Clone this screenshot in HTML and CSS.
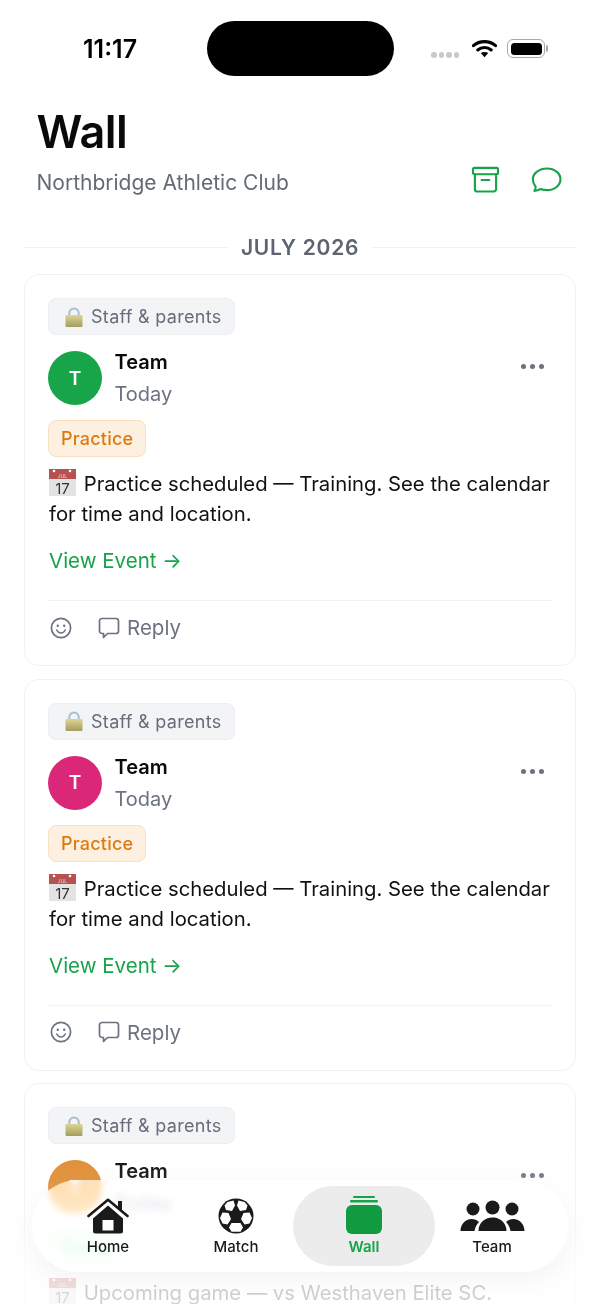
FILE: index.html
```html
<!DOCTYPE html>
<html lang="en">
<head>
    <meta charset="UTF-8">
    <meta name="viewport" content="width=device-width, initial-scale=1.0">
    <title>Wall</title>
    <link rel="stylesheet" href="styles.css">
</head>
<body>
    <svg class="icon-defs" width="0" height="0">
        <defs>
            <linearGradient id="lockBody" x1="0" y1="0" x2="0" y2="1">
                <stop offset="0" stop-color="#dcd596"/>
                <stop offset="1" stop-color="#a59c5c"/>
            </linearGradient>
            <symbol id="lock" viewBox="0 0 18 20">
                <path d="M4.300 9V6.200a4.700 4.700 0 0 1 9.400 0V9" fill="none" stroke="#a9bdd2" stroke-width="2"/>
                <rect x="0.500" y="8" width="17" height="12" rx="1.200" fill="url(#lockBody)"/>
            </symbol>
            <symbol id="calendar" viewBox="0 0 27 27">
                <rect x="0" y="0" width="27" height="27" fill="#e3e3e3"/>
                <rect x="0" y="0" width="27" height="10" fill="#b5524f"/>
                <circle cx="5" cy="2" r="1.300" fill="#fff"/>
                <circle cx="21" cy="2" r="1.300" fill="#fff"/>
                <text x="13.500" y="8.500" text-anchor="middle" class="cal-month">JUL</text>
                <text x="13.500" y="24.500" text-anchor="middle" class="cal-day">17</text>
            </symbol>
            <symbol id="smile" viewBox="0 0 22 22">
                <circle cx="11" cy="11" r="9.600" fill="none" stroke="currentColor" stroke-width="1.700"/>
                <circle cx="7.800" cy="8.800" r="1.200" fill="currentColor"/>
                <circle cx="14.200" cy="8.800" r="1.200" fill="currentColor"/>
                <path d="M6.800 13c1 2 2.500 3 4.200 3s3.200-1 4.200-3" fill="none" stroke="currentColor" stroke-width="1.600" stroke-linecap="round"/>
            </symbol>
            <symbol id="reply" viewBox="0 0 22 22">
                <path d="M4 1.500h14A2.500 2.500 0 0 1 20.500 4v10a2.500 2.500 0 0 1-2.500 2.500H9.500L5.500 20.500v-4H4A2.500 2.500 0 0 1 1.500 14V4A2.500 2.500 0 0 1 4 1.500z" fill="none" stroke="currentColor" stroke-width="1.700" stroke-linejoin="round"/>
            </symbol>
        </defs>
    </svg>

    <div class="screen">
        <div class="status-bar">
            <span class="status-time">11:17</span>
            <div class="island"></div>
            <div class="status-icons">
                <div class="signal"><i></i><i></i><i></i><i></i></div>
                <svg class="wifi" width="25" height="19" viewBox="0 0 26 19">
                    <path d="M1.500 6.500C7.800 1 18.200 1 24.500 6.500" fill="none" stroke="#000" stroke-width="3.200" stroke-linecap="round"/>
                    <path d="M6 11c4-3.300 10-3.300 14 0" fill="none" stroke="#000" stroke-width="3.200" stroke-linecap="round"/>
                    <path d="M13 18.500l-3.900-4.200c2.200-1.700 5.600-1.700 7.800 0z" fill="#000"/>
                </svg>
                <div class="battery"><div class="battery-fill"></div></div>
                <div class="battery-cap"></div>
            </div>
        </div>

        <header class="page-header">
            <div>
                <h1>Wall</h1>
                <p class="club">Northbridge Athletic Club</p>
            </div>
            <div class="header-actions">
                <svg width="29" height="27" viewBox="0 0 30 28" fill="none" stroke="#16a34a" stroke-width="2.200" stroke-linejoin="round" stroke-linecap="round">
                    <rect x="2" y="2" width="26" height="6.500" rx="1.500"/>
                    <path d="M4 8.500V24a2.500 2.500 0 0 0 2.500 2.500h17A2.500 2.500 0 0 0 26 24V8.500"/>
                    <path d="M11 14.500h8"/>
                </svg>
                <svg width="31" height="26" viewBox="0 0 32 27" fill="none" stroke="#16a34a" stroke-width="2.200" stroke-linejoin="round">
                    <path d="M16.500 1.500C24.500 1.500 30.500 6.500 30.500 12.800S24.500 24 16.500 24c-2.400 0-4.600-.4-6.500-1.200-1.800 1.300-4 2-6.500 2 .8-1.200 1.200-2.600 1.200-4.300C3 18.300 1.800 15.700 1.800 12.800 1.800 6.500 8.500 1.500 16.500 1.500z"/>
                </svg>
            </div>
        </header>

        <div class="month-divider"><span>JULY 2026</span></div>

        <article class="post">
            <div class="audience"><svg class="emoji-lock"><use href="#lock"/></svg>Staff &amp; parents</div>
            <div class="post-head">
                <div class="avatar avatar-green">T</div>
                <div class="post-meta">
                    <div class="post-author">Team</div>
                    <div class="post-date">Today</div>
                </div>
                <div class="more"><i></i><i></i><i></i></div>
            </div>
            <span class="tag tag-practice">Practice</span>
            <p class="post-text"><svg class="emoji-cal"><use href="#calendar"/></svg> Practice scheduled — Training. See the calendar for time and location.</p>
            <a class="post-link">View Event →</a>
            <div class="post-actions">
                <svg class="action-smile"><use href="#smile"/></svg>
                <div class="reply"><svg class="action-reply"><use href="#reply"/></svg>Reply</div>
            </div>
        </article>

        <article class="post">
            <div class="audience"><svg class="emoji-lock"><use href="#lock"/></svg>Staff &amp; parents</div>
            <div class="post-head">
                <div class="avatar avatar-pink">T</div>
                <div class="post-meta">
                    <div class="post-author">Team</div>
                    <div class="post-date">Today</div>
                </div>
                <div class="more"><i></i><i></i><i></i></div>
            </div>
            <span class="tag tag-practice">Practice</span>
            <p class="post-text"><svg class="emoji-cal"><use href="#calendar"/></svg> Practice scheduled — Training. See the calendar for time and location.</p>
            <a class="post-link">View Event →</a>
            <div class="post-actions">
                <svg class="action-smile"><use href="#smile"/></svg>
                <div class="reply"><svg class="action-reply"><use href="#reply"/></svg>Reply</div>
            </div>
        </article>

        <article class="post">
            <div class="audience"><svg class="emoji-lock"><use href="#lock"/></svg>Staff &amp; parents</div>
            <div class="post-head">
                <div class="avatar avatar-orange">T</div>
                <div class="post-meta">
                    <div class="post-author">Team</div>
                    <div class="post-date">Today</div>
                </div>
                <div class="more"><i></i><i></i><i></i></div>
            </div>
            <span class="tag tag-game">Game</span>
            <p class="post-text"><svg class="emoji-cal"><use href="#calendar"/></svg> Upcoming game — vs Westhaven Elite SC.</p>
        </article>

        <div class="bottom-fade"></div>

        <nav class="tab-bar">
            <div class="tab">
                <svg width="42" height="36" viewBox="0 0 42 36">
                    <path d="M6 20.500L21 7.500l15 13V33a2.500 2.500 0 0 1-2.500 2.500h-25A2.500 2.500 0 0 1 6 33z" fill="#1a1a1a"/>
                    <rect x="15.500" y="22" width="11" height="10.500" fill="#fff"/>
                    <path d="M1.500 18L21 1.800 40.500 18" fill="none" stroke="#1a1a1a" stroke-width="2.600" stroke-linecap="round" stroke-linejoin="round"/>
                    <path d="M31 3h4v11l-4-3.500z" fill="#1a1a1a"/>
                </svg>
                <span>Home</span>
            </div>
            <div class="tab">
                <svg width="36" height="36" viewBox="0 0 36 36">
                    <circle cx="18" cy="18" r="17.500" fill="#1a1a1a"/>
                    <polygon points="9.500,4 15.500,2.500 17,7.500 14,13 8,12 6.500,7.500" fill="#fff"/>
                    <polygon points="26.500,4 20.500,2.500 19,7.500 22,13 28,12 29.500,7.500" fill="#fff"/>
                    <polygon points="4.500,14.500 10.500,15 13,21 9.500,26.500 4.500,25.500 2,20" fill="#fff"/>
                    <polygon points="31.500,14.500 25.500,15 23,21 26.500,26.500 31.500,25.500 34,20" fill="#fff"/>
                    <polygon points="13.500,25 22.500,25 25,29.500 22.500,33.800 13.500,33.800 11,29.500" fill="#fff"/>
                </svg>
                <span>Match</span>
            </div>
            <div class="tab tab-active">
                <svg width="36" height="38" viewBox="0 0 36 38">
                    <rect x="7" y="0" width="22" height="2" rx="1" fill="#16a34a"/>
                    <rect x="4" y="4" width="28" height="2.500" rx="1.200" fill="#16a34a"/>
                    <rect x="0" y="9" width="36" height="29" rx="6" fill="#129a40"/>
                </svg>
                <span>Wall</span>
            </div>
            <div class="tab">
                <svg class="team-icon" width="65" height="32" viewBox="0 0 64 32">
                    <circle cx="12.500" cy="9" r="6.500" fill="#1a1a1a"/>
                    <circle cx="51.500" cy="9" r="6.500" fill="#1a1a1a"/>
                    <path d="M0 31c0-7 5-12 11-12 3 0 5.500 1 7.500 3-2.500 2.500-4 5.500-4.500 9z M64 31c0-7-5-12-11-12-3 0-5.500 1-7.500 3 2.500 2.500 4 5.500 4.500 9z" fill="#1a1a1a"/>
                    <circle cx="32" cy="7.500" r="7" fill="#1a1a1a"/>
                    <path d="M18 31c0-8 6-13.500 14-13.500S46 23 46 31z" fill="#1a1a1a"/>
                </svg>
                <span>Team</span>
            </div>
        </nav>
    </div>
</body>
</html>
```

FILE: styles.css
```css
* {
    box-sizing: border-box;
}

body {
    margin: 0;
    font-family: Inter, "Liberation Sans", sans-serif;
    background-color: #ffffff;
    color: #111111;
}

.icon-defs {
    position: absolute;
}

.cal-day {
    font-family: Inter, sans-serif;
    font-size: 15px;
    fill: #333333;
}

.cal-month {
    font-family: Inter, sans-serif;
    font-size: 5px;
    fill: #f0d0d0;
}

.screen {
    position: relative;
    height: 1304px;
    overflow: hidden;
    padding: 0 24px;
}

/* status bar */
.status-bar {
    display: flex;
    align-items: flex-start;
    height: 104px;
    padding-top: 21px;
}

.status-time {
    width: 183px;
    padding: 14px 0 0 59px;
    font-size: 25px;
    font-weight: 600;
    line-height: 28px;
    color: #000000;
}

.island {
    width: 187px;
    height: 55px;
    border-radius: 28px;
    background-color: #000000;
}

.status-icons {
    display: flex;
    align-items: center;
    margin-left: 37px;
    margin-top: 18px;
}

.signal {
    display: flex;
    gap: 2px;
    margin-top: 13px;
    margin-right: 13px;
}

.signal i {
    width: 5.500px;
    height: 5.500px;
    border-radius: 50%;
    background-color: #c9c9c9;
}

.wifi {
    margin-right: 10px;
}

.battery {
    width: 38px;
    height: 19px;
    padding: 2.500px;
    border: 1.500px solid #a8a8a8;
    border-radius: 6px;
}

.battery-fill {
    height: 100%;
    border-radius: 3.500px;
    background-color: #000000;
}

.battery-cap {
    width: 2px;
    height: 7px;
    margin-left: 1px;
    border-radius: 0 2px 2px 0;
    background-color: #a8a8a8;
}

/* header */
.page-header {
    display: flex;
    justify-content: space-between;
    align-items: flex-end;
    padding: 0 14px 0 12.500px;
}

h1 {
    margin: 0;
    font-size: 45px;
    font-weight: 600;
    line-height: 56px;
    letter-spacing: -0.500px;
    color: #0a0a0a;
}

.club {
    margin: 10px 0 0;
    font-size: 21px;
    line-height: 26px;
    color: #646b76;
}

.header-actions {
    display: flex;
    align-items: center;
    gap: 31px;
    padding-bottom: 3px;
}

.month-divider {
    display: flex;
    align-items: center;
    gap: 13px;
    height: 26px;
    margin: 38px 0 14px;
    font-size: 21px;
    font-weight: 600;
    letter-spacing: 0.700px;
    color: #5c6470;
}

.month-divider::before,
.month-divider::after {
    content: '';
    flex: 1;
    height: 1px;
    background-color: #f1f2f4;
}

/* post card */
.post {
    margin-bottom: 12.500px;
    padding: 23px 23px 0;
    height: 392px;
    border: 1px solid #f0f1f3;
    border-radius: 15px;
    background-color: #ffffff;
}

.audience {
    display: inline-flex;
    align-items: center;
    gap: 8px;
    height: 37px;
    padding: 0 12px 0 16px;
    border: 1px solid #eceef1;
    border-radius: 8px;
    background-color: #f3f4f6;
    font-size: 18px;
    letter-spacing: 0.300px;
    color: #666d7a;
}

.emoji-lock {
    width: 18px;
    height: 20px;
}

.post-head {
    display: flex;
    margin-top: 16px;
}

.avatar {
    display: flex;
    justify-content: center;
    align-items: center;
    width: 54px;
    height: 54px;
    border-radius: 50%;
    font-size: 19px;
    font-weight: 600;
    color: #ffffff;
}

.avatar-green {
    background-color: #18a54a;
}

.avatar-pink {
    background-color: #db2777;
}

.avatar-orange {
    background-color: #df8a2e;
}

.post-meta {
    flex: 1;
    margin-left: 12.500px;
}

.post-author {
    margin-top: -1px;
    font-size: 20px;
    font-weight: 600;
    line-height: 24px;
    color: #0a0a0a;
}

.post-date {
    margin-top: 7px;
    font-size: 20px;
    line-height: 26px;
    color: #6b7280;
}

.more {
    display: flex;
    gap: 4px;
    margin: 13px 8px 0 0;
}

.more i {
    width: 5px;
    height: 5px;
    border-radius: 50%;
    background-color: #6b7280;
}

.tag {
    display: inline-block;
    margin-top: 13px;
    height: 37px;
    padding: 0 12px;
    border-radius: 8px;
    font-size: 18px;
    font-weight: 500;
    line-height: 35px;
    letter-spacing: 0.200px;
}

.tag-practice {
    border: 1px solid #f9e0c2;
    background-color: #fdf0e1;
    color: #dd7a0f;
}

.tag-game {
    border: 1px solid #c6f0d3;
    background-color: #e6f9ec;
    color: #16a34a;
}

.post-text {
    margin: 12px 0 0;
    padding-left: 1px;
    font-size: 20.300px;
    line-height: 30px;
    color: #111111;
}

.emoji-cal {
    width: 27px;
    height: 27px;
    margin-right: 2px;
    vertical-align: -5px;
}

.post-link {
    display: block;
    margin-top: 18px;
    padding-left: 1px;
    font-size: 20.500px;
    line-height: 28px;
    color: #16a34a;
}

.post-actions {
    display: flex;
    align-items: center;
    gap: 26px;
    height: 54px;
    margin-top: 25px;
    padding: 0 2px;
    border-top: 1px solid #f1f2f4;
    color: #6b7280;
}

.action-smile {
    width: 22px;
    height: 22px;
}

.reply {
    display: flex;
    align-items: center;
    gap: 7px;
    font-size: 20.500px;
}

.action-reply {
    width: 22px;
    height: 22px;
}

/* floating tab bar */
.bottom-fade {
    position: absolute;
    left: 0;
    right: 0;
    bottom: 0;
    height: 160px;
    background: linear-gradient(to bottom, rgba(255, 255, 255, 0), rgba(255, 255, 255, 0.12) 25%, rgba(255, 255, 255, 0.8) 75%);
}

.tab-bar {
    position: absolute;
    left: 32px;
    top: 1180px;
    display: grid;
    grid-template-columns: repeat(4, 1fr);
    align-items: center;
    width: 536px;
    height: 92px;
    padding: 0 12px;
    border-radius: 46px;
    background-color: rgba(255, 255, 255, 0.72);
    backdrop-filter: blur(3px) saturate(2);
    box-shadow: 0 8px 30px rgba(0, 0, 0, 0.05);
}

.tab {
    display: flex;
    flex-direction: column;
    justify-content: flex-end;
    align-items: center;
    gap: 3px;
    height: 80px;
    padding-bottom: 10px;
    font-size: 15px;
    font-weight: 500;
    color: #1a1a1a;
}

.tab-active {
    margin: 0 -7px;
    border-radius: 40px;
    background-color: #ececec;
    font-weight: 600;
    color: #16a34a;
}

.team-icon {
    margin-bottom: 2px;
}
```
